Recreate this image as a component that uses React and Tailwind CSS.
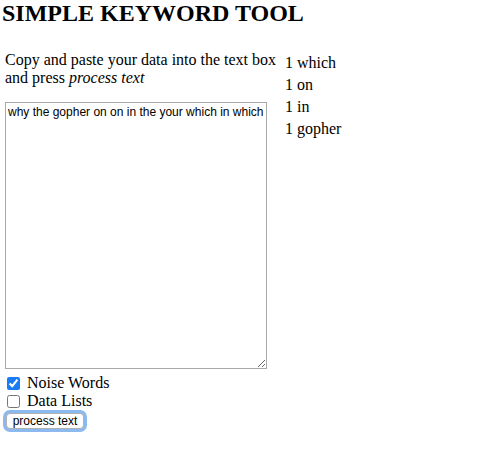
import { useState } from "react";

const serif = "font-['Liberation_Serif','Times_New_Roman',serif]";
const sans = "font-['Liberation_Sans',Arial,sans-serif]";

const counts = [
  { n: 1, word: "which" },
  { n: 1, word: "on" },
  { n: 1, word: "in" },
  { n: 1, word: "gopher" },
];

export default function App() {
  const [text, setText] = useState("why the gopher on on in the your which in which");
  const [noise, setNoise] = useState(true);
  const [lists, setLists] = useState(false);

  return (
    <div className={`${serif} bg-white text-black min-h-[449px]`}>
      <h1 className="pl-[2px] text-[24px] font-bold leading-[27px]">SIMPLE KEYWORD TOOL</h1>

      <div className="flex items-start pt-[24px]">
        <div className="w-[280px] pl-[5px]">
          <p className="text-[16px] leading-[18px]">
            Copy and paste your data into the text box and press <em>process text</em>
          </p>
          <textarea
            value={text}
            onChange={(e) => setText(e.target.value)}
            className={`${sans} mt-[15px] block w-[262px] h-[267px] border border-[#a9a9a9] px-[2px] py-[2px] text-[12px] leading-[14px] text-black`}
          />
          <label className="flex items-center mt-[5px] text-[16px] leading-[18px]">
            <input
              type="checkbox"
              checked={noise}
              onChange={(e) => setNoise(e.target.checked)}
              className="ml-[2px] mr-[7px] w-[13px] h-[13px] accent-[#1a7cf5]"
            />
            Noise Words
          </label>
          <label className="flex items-center text-[16px] leading-[18px]">
            <input
              type="checkbox"
              checked={lists}
              onChange={(e) => setLists(e.target.checked)}
              className="ml-[2px] mr-[7px] w-[13px] h-[13px]"
            />
            Data Lists
          </label>
          <button
            className={`${sans} mt-[3px] ml-[1px] block w-[78px] h-[16px] rounded-[4px] border border-[#b0b0b0] bg-white text-[12px] leading-[14px] text-black ring-[3px] ring-[#8cb9ef]`}
          >
            process text
          </button>
        </div>

        <div className="pl-[5px] pt-[1px]">
          {counts.map((c) => (
            <div key={c.word} className="text-[16px] leading-[18px] py-[2px]">
              {c.n} {c.word}
            </div>
          ))}
        </div>
      </div>
    </div>
  );
}
